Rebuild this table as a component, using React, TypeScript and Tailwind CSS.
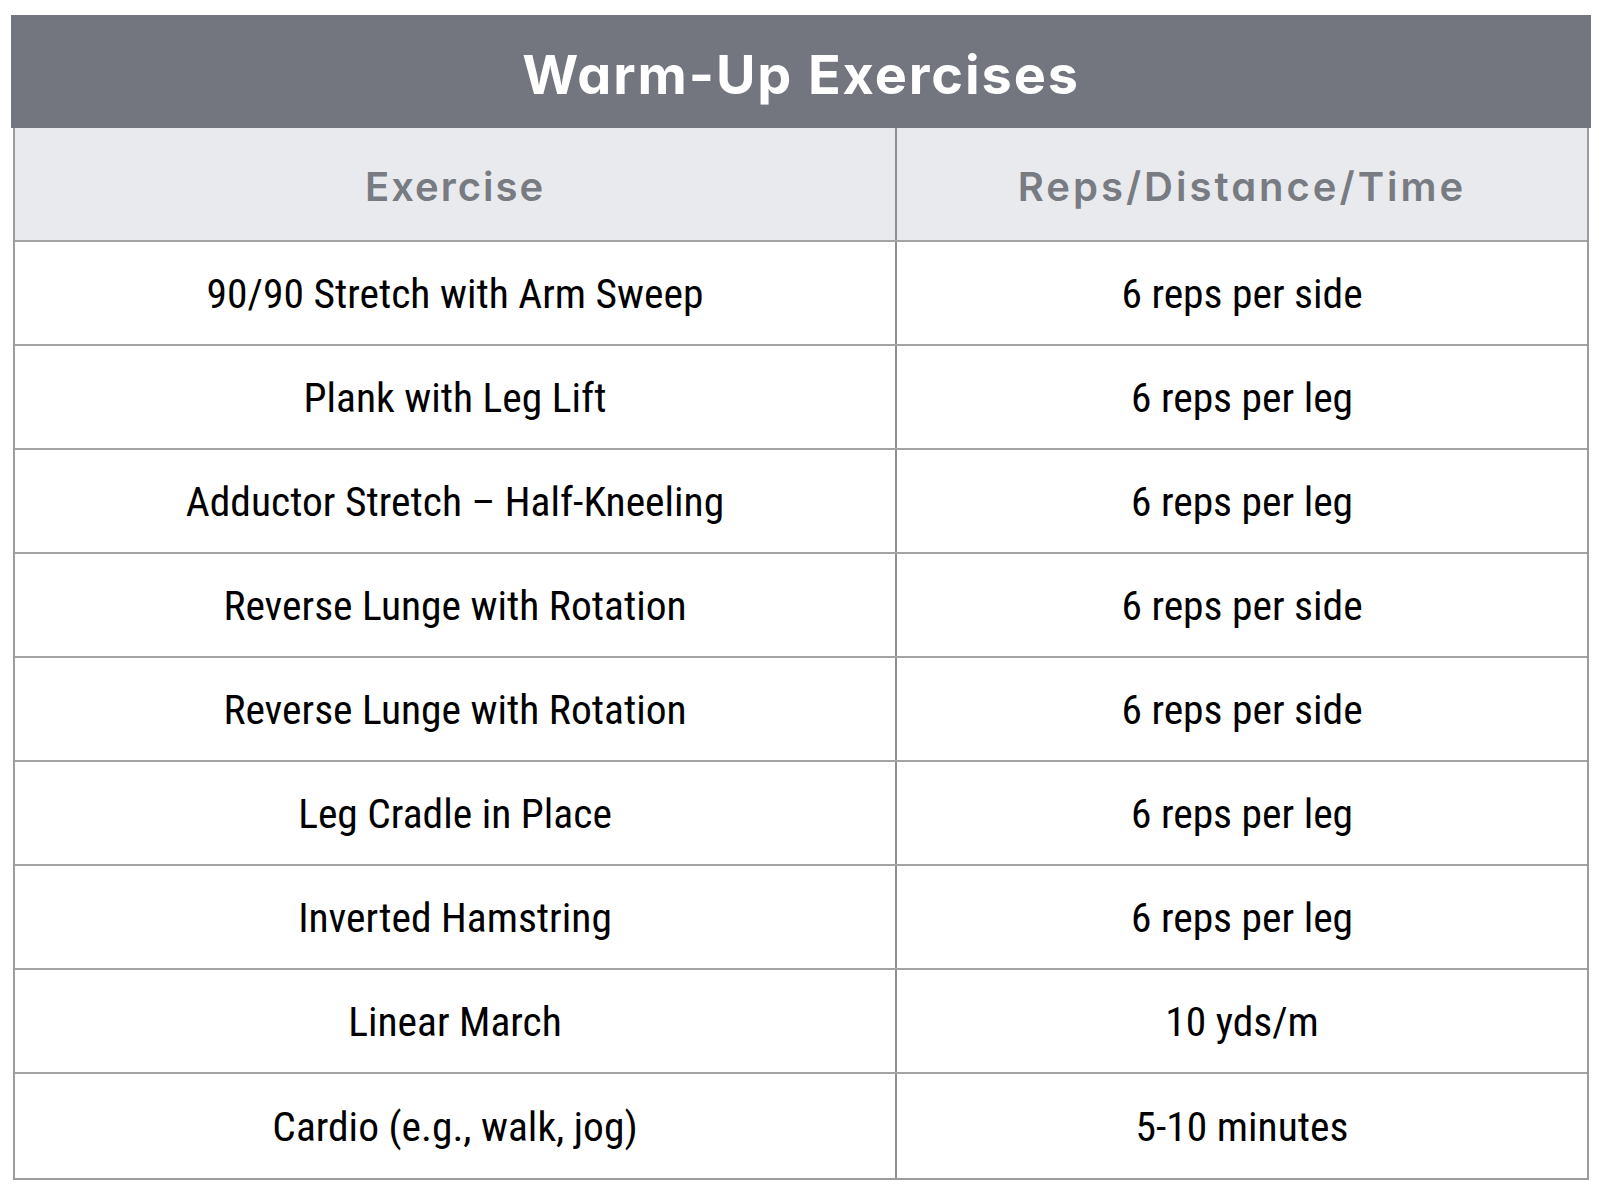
const rows = [
  { exercise: '90/90 Stretch with Arm Sweep', amount: '6 reps per side' },
  { exercise: 'Plank with Leg Lift', amount: '6 reps per leg' },
  { exercise: 'Adductor Stretch – Half-Kneeling', amount: '6 reps per leg' },
  { exercise: 'Reverse Lunge with Rotation', amount: '6 reps per side' },
  { exercise: 'Reverse Lunge with Rotation', amount: '6 reps per side' },
  { exercise: 'Leg Cradle in Place', amount: '6 reps per leg' },
  { exercise: 'Inverted Hamstring', amount: '6 reps per leg' },
  { exercise: 'Linear March', amount: '10 yds/m' },
  { exercise: 'Cardio (e.g., walk, jog)', amount: '5-10 minutes' },
];

const App = () => {
  return (
    <div className="min-h-screen bg-white pt-[15px] pl-[11px]">
      {/* Title bar */}
      <div className="w-[1580px] h-[113px] pt-[6px] bg-[#73767e] flex items-center justify-center">
        <h1 className="font-['Inter',sans-serif] [font-feature-settings:'cv11'] font-bold text-[54px] tracking-[0.035em] text-white leading-none">
          Warm-Up Exercises
        </h1>
      </div>

      {/* Table */}
      <div className="ml-[2px] w-[1576px] border-x-2 border-b-2 border-[#9c9c9c]">
        <div className="grid grid-cols-[882px_1fr] h-[114px] bg-[#e9eaed] border-b-2 border-[#a3a3a3]">
          <div className="flex items-center justify-center pt-[6px] border-r-2 border-[#8f8f8f] font-['Inter',sans-serif] [font-feature-settings:'cv11'] font-semibold text-[40px] tracking-[0.05em] text-[#787b81]">
            Exercise
          </div>
          <div className="flex items-center justify-center pt-[6px] font-['Inter',sans-serif] [font-feature-settings:'cv11'] font-semibold text-[40px] tracking-[0.075em] text-[#787b81]">
            Reps/Distance/Time
          </div>
        </div>

        {rows.map((row, i) => (
          <div
            key={i}
            className={`grid grid-cols-[882px_1fr] h-[104px] ${i < rows.length - 1 ? 'border-b-2 border-[#a3a3a3]' : ''}`}
          >
            <div className="flex items-center justify-center pt-[2px] border-r-2 border-[#8f8f8f] font-['Roboto_Condensed','Liberation_Sans_Narrow','DejaVu_Sans_Condensed',sans-serif] text-[41.5px] text-black">
              {row.exercise}
            </div>
            <div className="flex items-center justify-center pt-[2px] font-['Roboto_Condensed','Liberation_Sans_Narrow','DejaVu_Sans_Condensed',sans-serif] text-[41.5px] text-black">
              {row.amount}
            </div>
          </div>
        ))}
      </div>
    </div>
  );
};

export default App;
